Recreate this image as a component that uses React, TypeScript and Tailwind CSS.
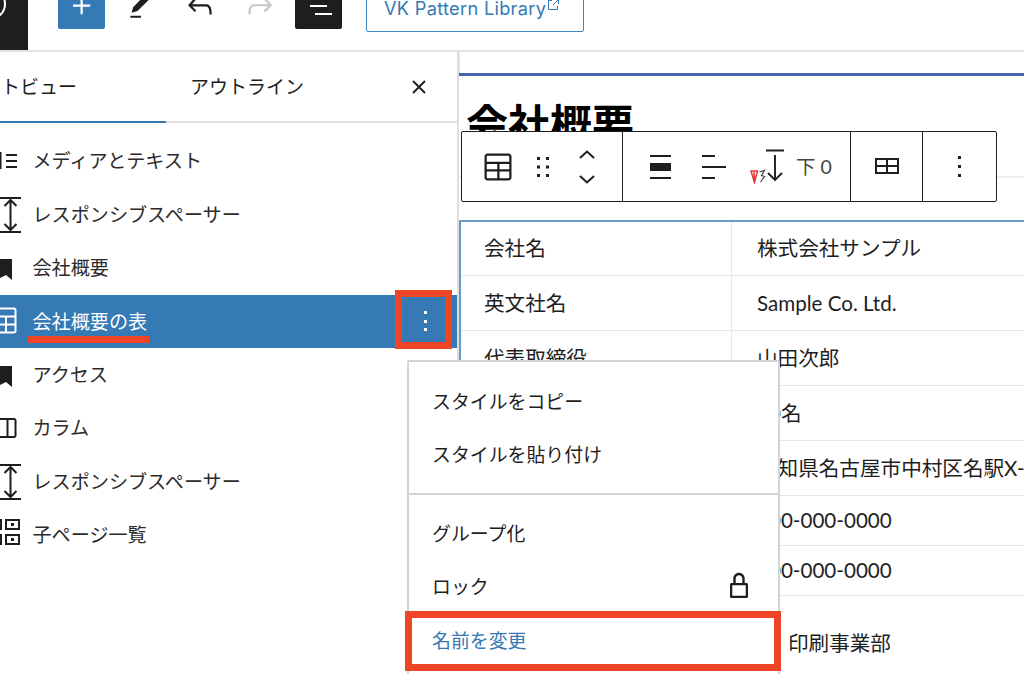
import React from "react";

const ink = "#1e1e1e";
const blue = "#3579b5";
const cjk = { fontFamily: '"Noto Sans CJK JP", "Noto Sans", sans-serif' };
const lato = { fontFamily: 'Lato, "Noto Sans CJK JP", sans-serif' };

function Wp({ d, size = 32, fill = ink }: { d: string; size?: number; fill?: string }) {
  return (
    <svg width={size} height={size} viewBox="0 0 24 24" fill={fill} className="shrink-0">
      <path d={d} />
    </svg>
  );
}

const TABLE =
  "M19 3H5c-1.1 0-2 .9-2 2v14c0 1.1.9 2 2 2h14c1.1 0 2-.9 2-2V5c0-1.1-.9-2-2-2zM5 4.5h14c.3 0 .5.2.5.5v3.5h-15V5c0-.3.2-.5.5-.5zm8 5.5h6.5v3.5H13V10zm-1.5 3.5h-7V10h7v3.5zm-7 5.5v-4h7v4.5H5c-.3 0-.5-.2-.5-.5zm14.5.5h-6V15h6.5v4c0 .3-.2.5-.5.5z";
const UNDO =
  "M18.3 11.7c-.6-.6-1.4-.9-2.3-.9H6.7l2.9-3.3-1.1-1-4.5 5L8.5 16l1-1-2.7-2.7H16c.5 0 .9.2 1.3.5 1 1 1 3.4 1 4.5v.3h1.5v-.2c0-1.5 0-4.3-1.5-5.7z";
const REDO =
  "M15.6 6.5l-1.1 1 2.9 3.3H8c-.9 0-1.7.3-2.3.9-1.4 1.5-1.4 4.2-1.4 5.6v.2h1.5v-.3c0-1.1 0-3.5 1-4.5.3-.3.7-.5 1.3-.5h9.2L14.5 15l1.1 1.1 4.6-4.6-4.6-5z";
const PEN = "M20.1 5.1L16.9 2 6.2 12.7l-1.3 4.4 4.5-1.3L20.1 5.1zM4 20.8h8v-1.5H4v1.5z";
const LOCK =
  "M17 10h-1.2V7c0-2.1-1.7-3.8-3.8-3.8-2.1 0-3.8 1.7-3.8 3.8v3H7c-.6 0-1 .4-1 1v8c0 .6.4 1 1 1h10c.6 0 1-.4 1-1v-8c0-.6-.4-1-1-1zM9.8 7c0-1.2 1-2.2 2.2-2.2 1.2 0 2.2 1 2.2 2.2v3H9.8V7zm6.7 11.5h-9v-7h9v7z";

/* List-view icons: drawn in page pixels, their left side is cut off by the window edge. */
function ListIcon({ kind, color = ink }: { kind: string; color?: string }) {
  const s = { stroke: color, strokeWidth: 2, fill: "none" };
  return (
    <svg width={24} height={40} viewBox="0 0 24 40" className="shrink-0">
      {kind === "media" && (
        <>
          <rect x={-6} y={11} width={7.5} height={17} fill={color} />
          <path d="M6 14h11M6 20h11M6 26h11" {...s} />
        </>
      )}
      {kind === "spacer" && (
        <>
          <path d="M0 3h21M0 37h21" {...s} />
          <path d="M10.5 5v30M4.5 11l6-6 6 6M4.5 29l6 6 6-6" {...s} />
        </>
      )}
      {kind === "bookmark" && <path d="M0 11h12v21l-6-5-6 3z" fill={color} />}
      {kind === "table" && (
        <path d="M-4 7.500h18a1.500 1.500 0 0 1 1.500 1.500v21a1.500 1.500 0 0 1-1.500 1.500H-4M-4 15.500h19.500M6 15.500V31.500M-4 23.500h19.500" {...s} />
      )}
      {kind === "column" && (
        <>
          <path d="M-4 11h18a1.500 1.500 0 0 1 1.500 1.500v15a1.500 1.500 0 0 1-1.500 1.500H-4" {...s} />
          <path d="M7.500 11v18" {...s} />
        </>
      )}
      {kind === "child" && (
        <>
          <rect x={6} y={5} width={13} height={9} {...s} />
          <rect x={6} y={20} width={13} height={9} {...s} />
          <rect x={11} y={8} width={3} height={3} fill={color} />
          <rect x={11} y={23} width={3} height={3} fill={color} />
          <path d="M-2 5h3v9h-3M-2 20h3v9h-3" {...s} />
        </>
      )}
    </svg>
  );
}

const listRows = [
  ["media", "メディアとテキスト"],
  ["spacer", "レスポンシブスペーサー"],
  ["bookmark", "会社概要"],
  ["table", "会社概要の表"],
  ["bookmark", "アクセス"],
  ["column", "カラム"],
  ["spacer", "レスポンシブスペーサー"],
  ["child", "子ページ一覧"],
];

const tableRows: [string, string, number][] = [
  ["会社名", "株式会社サンプル", 54],
  ["英文社名", "Sample Co. Ltd.", 55],
  ["代表取締役", "山田次郎", 55],
  ["従業員数", "10名", 55],
  ["所在地", "愛知県名古屋市中村区名駅X-X-X", 55],
  ["電話番号", "000-000-0000", 50],
  ["FAX", "000-000-0000", 50],
];

function MenuItem({ children, color = ink }: { children: React.ReactNode; color?: string }) {
  return (
    <div className="h-[53.4px] flex items-center justify-between pl-[23px] pr-[21px] text-[18.9px]" style={{ color }}>
      {children}
    </div>
  );
}

export default function App() {
  return (
    <div className="relative w-[1024px] h-[674px] overflow-hidden bg-white flex flex-col" style={cjk}>
      {/* Top bar */}
      <header className="h-[52px] shrink-0 flex overflow-hidden border-b-2 border-[#e3e3e3]">
        <div className="w-[28px] h-full bg-[#1e1e1e] relative overflow-hidden shrink-0">
          <div className="absolute left-[-26px] top-[-12px] w-[32px] h-[32px] rounded-full border-2 border-white" />
        </div>
        <div className="flex items-end h-[29px] ml-[30px]">
          <div className="w-[47px] h-[47px] rounded-[2px] bg-[#3579b5] flex items-center justify-center">
            <Wp d="M11 12.500V17.500H12.500V12.500H17.500V11H12.500V6H11V11H6V12.500H11Z" fill="#ffffff" size={36} />
          </div>
          <div className="ml-[20px] mb-[7.500px]"><Wp d={PEN} /></div>
          <div className="ml-[25px] mb-[5.500px]"><Wp d={UNDO} size={36} /></div>
          <div className="ml-[23.500px] mb-[5.500px]"><Wp d={REDO} fill="#c8c8c8" size={36} /></div>
          <div className="ml-[17.500px] w-[47px] h-[47px] rounded-[2px] bg-[#1e1e1e] relative">
            <div className="absolute left-[15px] bottom-[22px] w-[17px] h-[2px] bg-white" />
            <div className="absolute left-[20px] bottom-[14px] w-[17px] h-[2px] bg-white" />
          </div>
          <div className="ml-[24px] mb-[-3px] w-[218px] h-[47px] rounded-[2px] border-[1.500px] border-[#3f85c0] flex items-center pl-[17px] text-[#3579b5]">
            <span className="text-[18.200px] tracking-[0.3px] whitespace-nowrap" style={{ fontFamily: "Inter, sans-serif" }}>VK Pattern Library</span>
            <svg width={13} height={13} viewBox="0 0 13 13" fill="none" stroke="#3579b5" strokeWidth={1} className="mb-[8px] ml-[1px]">
              <path d="M5 2.500H1.500v9h9V8M7 1.500h4.500V6M11.500 1.500L6 7" />
            </svg>
          </div>
        </div>
      </header>

      <div className="flex-1 flex min-h-0">
        {/* List panel */}
        <aside className="w-[459px] shrink-0 border-r-2 border-[#dedede] flex flex-col">
          <div className="h-[71px] shrink-0 flex border-b-2 border-[#e0e0e0]">
            <div className="w-[166px] h-[71px] border-b-2 border-[#3579b5] flex items-center justify-end pr-[89px] text-[19px] text-[#1e1e1e] whitespace-nowrap">
              リストビュー
            </div>
            <div className="w-[162px] h-[69px] flex items-center justify-center text-[19px] text-[#1e1e1e]">アウトライン</div>
            <div className="flex-1 h-[69px] flex items-center justify-center pl-[52px]">
              <svg width={18} height={18} viewBox="0 0 18 18" stroke={ink} strokeWidth={1.9} fill="none">
                <path d="M3 3l12 12M15 3L3 15" />
              </svg>
            </div>
          </div>
          <div className="pt-[11.500px]">
            {listRows.map(([kind, label], i) => {
              const selected = i === 3;
              return (
                <div
                  key={i}
                  className={
                    selected
                      ? "h-[53.4px] flex items-center bg-[#3579b5] text-white text-[19.1px]"
                      : "h-[53.4px] flex items-center text-[#2b2b2b] text-[19.1px]"
                  }
                >
                  <ListIcon kind={kind} color={selected ? "#ffffff" : ink} />
                  <span className="ml-[8.500px] mt-[-1px] whitespace-nowrap">{label}</span>
                  {selected && (
                    <span className="ml-auto mr-[30.500px] flex flex-col gap-[5.500px]">
                      <span className="block w-[3px] h-[3px] bg-white" />
                      <span className="block w-[3px] h-[3px] bg-white" />
                      <span className="block w-[3px] h-[3px] bg-white" />
                    </span>
                  )}
                </div>
              );
            })}
          </div>
        </aside>

        {/* Editor canvas */}
        <main className="flex-1 min-w-0 flex flex-col">
          <div className="h-[21px] shrink-0 border-l border-dotted border-[#cccccc]" />
          <div className="h-[3px] shrink-0 bg-[#4565b0]" />
          <div className="h-[102px] shrink-0 border-b-2 border-[#eeeeee] pl-[7px] pt-[16px]">
            <h2 className="text-[42px] leading-[60px] font-bold text-black whitespace-nowrap">会社概要</h2>
          </div>
          <div className="h-[42px] shrink-0" />
          <div className="border-t-2 border-l-2 border-[#6a9bc8] text-[20.600px] text-[#1e1e1e]" style={lato}>
            {tableRows.map(([a, b, h]) => (
              <div key={a} className="flex border-b border-[#e8e8e8]" style={{ height: h }}>
                <div className="w-[271px] shrink-0 border-r border-[#e8e8e8] pl-[23px] flex items-center whitespace-nowrap">{a}</div>
                <div className="pl-[25px] flex items-center whitespace-nowrap">{b}</div>
              </div>
            ))}
            <div className="flex h-[100px]">
              <div className="w-[271px] shrink-0 border-r border-[#e8e8e8] pl-[23px] pt-[15px]">事業内容</div>
              <div className="pl-[56px] pt-[32px] whitespace-nowrap">印刷事業部</div>
            </div>
          </div>
        </main>
      </div>

      {/* Block toolbar */}
      <div className="absolute left-[461px] top-[131px] w-[536px] h-[71px] bg-white border border-[#1e1e1e] rounded-[2px] flex">
        <div className="w-[161px] shrink-0 border-r border-[#1e1e1e] flex items-center pl-[18px]">
          <Wp d={TABLE} size={36} />
          <svg width={12} height={20} viewBox="0 0 12 20" fill={ink} className="ml-[21px] shrink-0">
            <rect x={0} y={0} width={3} height={3} />
            <rect x={9} y={0} width={3} height={3} />
            <rect x={0} y={8.500} width={3} height={3} />
            <rect x={9} y={8.500} width={3} height={3} />
            <rect x={0} y={17} width={3} height={3} />
            <rect x={9} y={17} width={3} height={3} />
          </svg>
          <svg width={20} height={36} viewBox="0 0 20 36" fill="none" stroke={ink} strokeWidth={2} className="ml-[28px] shrink-0">
            <path d="M3 9l7-6.500 7 6.500M3 27l7 6.500 7-6.500" />
          </svg>
        </div>
        <div className="w-[228px] shrink-0 border-r border-[#1e1e1e] flex items-center">
          <svg width={21} height={24} viewBox="0 0 21 24" fill={ink} className="ml-[27px] shrink-0">
            <rect x={0} y={0} width={21} height={2} />
            <rect x={0} y={8} width={21} height={8} />
            <rect x={0} y={22} width={21} height={2} />
          </svg>
          <svg width={24} height={24} viewBox="0 0 24 24" fill={ink} className="ml-[31px] shrink-0">
            <rect x={0} y={0} width={13} height={2} />
            <rect x={0} y={11} width={24} height={2} />
            <rect x={0} y={22} width={13} height={2} />
          </svg>
          <svg width={16} height={15} viewBox="0 0 16 15" fill="none" className="ml-[24px] mt-[20px] shrink-0">
            <path d="M1 2l3.500 11.500L7.500 2zM4 3l.500 9" stroke="#e03a3a" strokeWidth={1.500} />
            <path d="M9.500 3l5-1.500-3 5 3 1-4 5.500" stroke="#444444" strokeWidth={1.200} />
          </svg>
          <svg width={18} height={36} viewBox="0 0 18 36" fill="none" stroke={ink} strokeWidth={1.900} className="shrink-0">
            <path d="M0 1.500h18M9 6v25M2 24l7 7 7-7" />
          </svg>
          <span className="ml-[12px] text-[19.500px] text-[#444444] whitespace-nowrap" style={lato}>下 0</span>
        </div>
        <div className="w-[72px] shrink-0 border-r border-[#1e1e1e] flex items-center justify-center">
          <svg width={24} height={16} viewBox="0 0 24 16" fill="none" stroke={ink} strokeWidth={2} className="mt-[-1px]">
            <path d="M1 1h22v14H1zM1 8h22M12 1v14" />
          </svg>
        </div>
        <div className="flex-1 flex items-center justify-center">
          <span className="flex flex-col gap-[6px]">
            <span className="block w-[3px] h-[3px] bg-[#1e1e1e]" />
            <span className="block w-[3px] h-[3px] bg-[#1e1e1e]" />
            <span className="block w-[3px] h-[3px] bg-[#1e1e1e]" />
          </span>
        </div>
      </div>

      {/* Dropdown menu */}
      <div className="absolute left-[407px] top-[360px] w-[373px] h-[330px] bg-white border-2 border-[#d4d4d4] rounded-[2px]">
        <div className="pt-[12px] pb-[12px] border-b-2 border-[#d4d4d4]">
          <MenuItem>スタイルをコピー</MenuItem>
          <MenuItem>スタイルを貼り付け</MenuItem>
        </div>
        <div className="pt-[11.500px]">
          <MenuItem>グループ化</MenuItem>
          <MenuItem>
            ロック
            <Wp d={LOCK} size={36} />
          </MenuItem>
          <MenuItem color={blue}>名前を変更</MenuItem>
        </div>
      </div>

      {/* Red annotations */}
      <div className="absolute left-[28px] top-[336px] w-[121px] h-[7px] bg-[#ee4526]" />
      <div className="absolute left-[395px] top-[290px] w-[57px] h-[59px] border-[7px] border-[#ee4526]" />
      <div className="absolute left-[405px] top-[611px] w-[376px] h-[60px] border-[7px] border-[#ee4526]" />
    </div>
  );
}
